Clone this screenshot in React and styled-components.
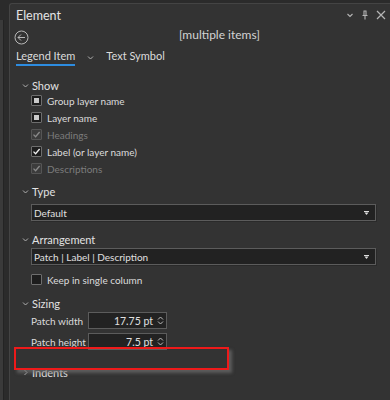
import styled, { createGlobalStyle } from "styled-components";

const GlobalStyle = createGlobalStyle`
  html, body {
    margin: 0;
    padding: 0;
    background: #2b2b2b;
  }
  body {
    font-family: Lato, "Open Sans", sans-serif;
  }
`;

const Frame = styled.div`
  width: 390px;
  height: 400px;
  display: flex;
  background: #2b2b2b;
  overflow: hidden;
`;

const SideStrip = styled.div`
  width: 9px;
  display: flex;
  flex-direction: column;
  padding-top: 20px;
  box-sizing: border-box;
`;

const SideLine = styled.div`
  width: 3px;
  flex: 1;
  background: #3a3a3a;
  border-right: 1px solid #242424;
`;

const Panel = styled.div`
  flex: 1;
  margin-top: 3px;
  background: #333333;
  border-top: 1px solid #444;
  border-left: 1px solid #444;
  border-top-left-radius: 3px;
  position: relative;
  color: #dedede;
`;

const TitleBar = styled.div`
  height: 22px;
  display: flex;
  align-items: center;
  padding: 0 4px 0 6px;
`;

const Title = styled.div`
  flex: 1;
  font-size: 12.5px;
  color: #e4e4e4;
`;

const TitleIcons = styled.div`
  display: flex;
  align-items: center;
  gap: 7px;
`;

const SubBar = styled.div`
  height: 22px;
  display: flex;
  align-items: center;
  padding-left: 4px;
`;

const SubTitle = styled.div`
  flex: 1;
  text-align: center;
  font-size: 12px;
  color: #d4d4d4;
  margin-top: -6px;
  padding-left: 20px;
`;

const Tabs = styled.div`
  height: 22px;
  display: flex;
  align-items: flex-start;
  padding-left: 6px;
`;

const Tab = styled.div`
  font-size: 11px;
  color: #dcdcdc;
  height: 16px;
  line-height: 16px;
  border-bottom: 2px solid ${(p) => (p.$active ? "#2d8ce0" : "transparent")};
`;

const TabChevron = styled.div`
  width: 31px;
  height: 16px;
  display: flex;
  align-items: center;
  justify-content: center;
  padding-top: 3px;
  box-sizing: border-box;
`;

const Content = styled.div`
  padding: 0 14px 0 12px;
`;

const Section = styled.div`
  margin-top: ${(p) => p.$gap}px;
`;

const SectionHead = styled.div`
  height: 13px;
  display: flex;
  align-items: center;
  gap: 3px;
  font-size: 11px;
  color: #e2e2e2;
`;

const Body = styled.div`
  padding-left: 9px;
  margin-top: ${(p) => p.$top || 0}px;
`;

const CheckRow = styled.div`
  height: 17px;
  display: flex;
  align-items: center;
  gap: 5px;
  margin-top: ${(p) => p.$top || 0}px;
  font-size: 10px;
  color: ${(p) => (p.$disabled ? "#7c7c7c" : "#dcdcdc")};
`;

const Box = styled.div`
  width: 9px;
  height: 9px;
  border: 1px solid ${(p) => (p.$disabled ? "#555" : "#6e6e6e")};
  background: ${(p) => (p.$disabled ? "#3c3c3c" : "#1d1d1d")};
  border-radius: 1px;
  display: flex;
  align-items: center;
  justify-content: center;
`;

const Mixed = styled.div`
  width: 5px;
  height: 5px;
  background: #c9c9c9;
`;

const Select = styled.div`
  height: 15px;
  border: 1px solid #5c5c5c;
  background: #222222;
  display: flex;
  align-items: center;
  padding: 0 6px 0 2px;
  font-size: 10px;
  color: #e0e0e0;
  box-shadow: 1px 1px 0 #2a2a2a;
`;

const SelectText = styled.div`
  flex: 1;
`;

const FieldRow = styled.div`
  display: flex;
  align-items: center;
  height: 17px;
  margin-bottom: 4px;
  font-size: 10px;
  color: #dcdcdc;
`;

const FieldLabel = styled.div`
  width: 57px;
  white-space: nowrap;
`;

const NumberBox = styled.div`
  width: 75px;
  height: 15px;
  border: 1px solid #5c5c5c;
  background: #222222;
  display: flex;
  align-items: center;
  justify-content: flex-end;
  gap: 4px;
  padding-right: 2px;
  font-size: 10.5px;
  color: #e0e0e0;
`;

const Spinner = styled.div`
  display: flex;
  flex-direction: column;
  gap: 1px;
`;

const Callout = styled.div`
  position: absolute;
  left: 4px;
  top: 343px;
  width: 211px;
  height: 19px;
  border: 2px solid #ee1a1a;
  box-shadow: 3px 3px 3px rgba(110, 110, 110, 0.7);
`;

const Chevron = ({ open = true }) => (
  <svg width="7" height="7" viewBox="0 0 7 7">
    <path
      d={open ? "M1 2.5 L3.5 5 L6 2.5" : "M2.5 1 L5 3.5 L2.5 6"}
      fill="none"
      stroke="#b0b0b0"
      strokeWidth="1"
    />
  </svg>
);

const Check = ({ color }) => (
  <svg width="9" height="9" viewBox="0 0 9 9">
    <path d="M1.5 4.6 L3.6 6.7 L7.6 2" fill="none" stroke={color} strokeWidth="1.3" />
  </svg>
);

const Caret = () => (
  <svg width="5" height="4" viewBox="0 0 5 4">
    <rect x="0" y="0" width="5" height="1" fill="#ddd" />
    <path d="M0.5 1.5 H4.5 L2.5 4 Z" fill="#ddd" />
  </svg>
);

const CheckItem = ({ state, disabled, top, children }) => (
  <CheckRow $disabled={disabled} $top={top}>
    <Box $disabled={disabled}>
      {state === "mixed" && <Mixed />}
      {state === "on" && <Check color={disabled ? "#8a8a8a" : "#f0f0f0"} />}
    </Box>
    {children}
  </CheckRow>
);

const NumberField = ({ label, value }) => (
  <FieldRow>
    <FieldLabel>{label}</FieldLabel>
    <NumberBox>
      {value}
      <Spinner>
        <svg width="7" height="4" viewBox="0 0 7 4">
          <path d="M1 3.5 L3.5 1 L6 3.5" fill="none" stroke="#bbb" strokeWidth="1" />
        </svg>
        <svg width="7" height="4" viewBox="0 0 7 4">
          <path d="M1 0.5 L3.5 3 L6 0.5" fill="none" stroke="#bbb" strokeWidth="1" />
        </svg>
      </Spinner>
    </NumberBox>
  </FieldRow>
);

export default function App() {
  return (
    <Frame>
      <GlobalStyle />
      <SideStrip>
        <SideLine />
      </SideStrip>
      <Panel>
        <TitleBar>
          <Title>Element</Title>
          <TitleIcons>
            <svg width="8" height="8" viewBox="0 0 8 8">
              <path d="M1.5 3 L4 5.5 L6.5 3" fill="none" stroke="#b5b5b5" strokeWidth="1.1" />
            </svg>
            <svg width="8" height="10" viewBox="0 0 8 10">
              <path d="M2.5 1 H5.5 M3 1 V5.5 M5 1 V5.5 M1.5 5.5 H6.5 M4 5.5 V9.5" fill="none" stroke="#b5b5b5" strokeWidth="1.1" />
            </svg>
            <svg width="10" height="10" viewBox="0 0 10 10">
              <path d="M1 1 L9 9 M9 1 L1 9" fill="none" stroke="#b5b5b5" strokeWidth="1.2" />
            </svg>
          </TitleIcons>
        </TitleBar>
        <SubBar>
          <svg width="15" height="15" viewBox="0 0 15 15">
            <circle cx="7.5" cy="7.5" r="6.5" fill="none" stroke="#b8b8b8" strokeWidth="1" />
            <path d="M4 7.5 H11 M7 4.5 L4 7.5 L7 10.5" fill="none" stroke="#b8b8b8" strokeWidth="1" />
          </svg>
          <SubTitle>[multiple items]</SubTitle>
        </SubBar>
        <Tabs>
          <Tab $active>Legend Item</Tab>
          <TabChevron>
            <Chevron />
          </TabChevron>
          <Tab>Text Symbol</Tab>
        </Tabs>
        <Content>
          <Section $gap={9}>
            <SectionHead>
              <Chevron />
              Show
            </SectionHead>
            <Body>
              <CheckItem state="mixed">Group layer name</CheckItem>
              <CheckItem state="mixed">Layer name</CheckItem>
              <CheckItem state="on" disabled>Headings</CheckItem>
              <CheckItem state="on">Label (or layer name)</CheckItem>
              <CheckItem state="on" disabled>Descriptions</CheckItem>
            </Body>
          </Section>
          <Section $gap={8}>
            <SectionHead>
              <Chevron />
              Type
            </SectionHead>
            <Body $top={6}>
              <Select>
                <SelectText>Default</SelectText>
                <Caret />
              </Select>
            </Body>
          </Section>
          <Section $gap={12}>
            <SectionHead>
              <Chevron />
              Arrangement
            </SectionHead>
            <Body $top={2}>
              <Select>
                <SelectText>Patch | Label | Description</SelectText>
                <Caret />
              </Select>
              <CheckItem top={6}>Keep in single column</CheckItem>
            </Body>
          </Section>
          <Section $gap={9}>
            <SectionHead>
              <Chevron />
              Sizing
            </SectionHead>
            <Body $top={2}>
              <NumberField label="Patch width" value="17.75 pt" />
              <NumberField label="Patch height" value="7.5 pt" />
            </Body>
          </Section>
          <Section $gap={16}>
            <SectionHead>
              <Chevron open={false} />
              Indents
            </SectionHead>
          </Section>
        </Content>
        <Callout />
      </Panel>
    </Frame>
  );
}
